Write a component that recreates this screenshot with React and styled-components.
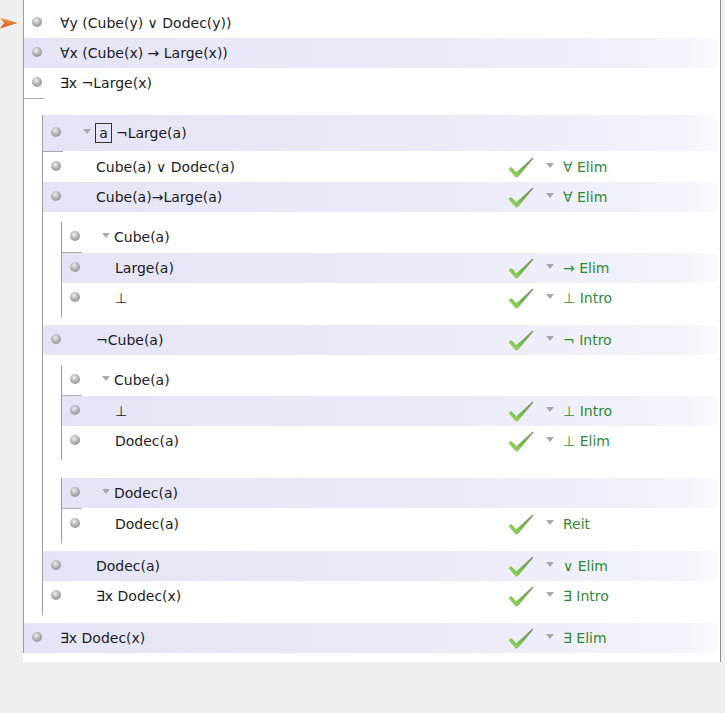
import styled, { createGlobalStyle, css } from 'styled-components'

const GlobalStyle = createGlobalStyle`
  html, body {
    margin: 0;
    padding: 0;
    background: #efefef;
  }
  body {
    font-family: "DejaVu Sans", Verdana, sans-serif;
  }
`

const proofData = {
  premises: [
    '∀y (Cube(y) ∨ Dodec(y))',
    '∀x (Cube(x) → Large(x))',
    '∃x ¬Large(x)',
  ],
  steps: [
    {
      assume: { text: '¬Large(a)', boxed: 'a' },
      steps: [
        { text: 'Cube(a) ∨ Dodec(a)', rule: '∀ Elim' },
        { text: 'Cube(a)→Large(a)', rule: '∀ Elim' },
        {
          assume: { text: 'Cube(a)' },
          steps: [
            { text: 'Large(a)', rule: '→ Elim' },
            { text: '⊥', rule: '⊥ Intro' },
          ],
        },
        { text: '¬Cube(a)', rule: '¬ Intro' },
        {
          assume: { text: 'Cube(a)' },
          steps: [
            { text: '⊥', rule: '⊥ Intro' },
            { text: 'Dodec(a)', rule: '⊥ Elim' },
          ],
        },
        {
          assume: { text: 'Dodec(a)' },
          steps: [{ text: 'Dodec(a)', rule: 'Reit' }],
        },
        { text: 'Dodec(a)', rule: '∨ Elim' },
        { text: '∃x Dodec(x)', rule: '∃ Intro' },
      ],
    },
    { text: '∃x Dodec(x)', rule: '∃ Elim' },
  ],
}

// numero de linea global, para alternar el fondo
function numberSteps(steps, counter) {
  return steps.map((s) => {
    if (s.assume) {
      const assume = { ...s.assume, n: counter.n++ }
      return { ...s, assume, steps: numberSteps(s.steps, counter) }
    }
    return { ...s, n: counter.n++ }
  })
}

const counter = { n: 0 }
const premises = proofData.premises.map((text) => ({ text, n: counter.n++ }))
const steps = numberSteps(proofData.steps, counter)

const Page = styled.div`
  width: 725px;
  height: 713px;
  overflow: hidden;
  background: #efefef;
`

const Panel = styled.div`
  margin-left: 23px;
  width: 698px;
  box-sizing: border-box;
  background: #fff;
  border-right: 1px solid #8e8e8e;
  padding-bottom: 9px;
`

const ProofBox = styled.div`
  display: flex;
  flex-direction: column;
  border-left: 1px solid #9e9e9e;

  ${({ $main }) =>
    $main
      ? css`
          padding-top: 8px;
        `
      : css`
          margin: 10px 0 8px 18px;
          padding-bottom: 4px;
        `}
`

const Bar = styled.div`
  width: 20px;
  height: 1px;
  background: #a8a8a8;
  margin-bottom: ${({ $gap }) => $gap || 0}px;
`

const Row = styled.div`
  position: relative;
  display: flex;
  align-items: center;
  height: ${({ $tall }) => ($tall ? 36 : 30)}px;
  margin-right: 3px;
  background: ${({ $shaded }) =>
    $shaded
      ? 'linear-gradient(90deg, #e4e4f6 0%, #eaeaf8 55%, #f3f3fb 95%, #fafafe 100%)'
      : 'transparent'};
`

const Pointer = styled.svg`
  position: absolute;
  left: -24px;
  top: 9px;
`

const Bullet = styled.span`
  flex: none;
  width: 10px;
  height: 10px;
  border-radius: 50%;
  margin-left: 8px;
  margin-top: -2px;
  background: radial-gradient(
    circle at 42% 35%,
    #f0f0f0 0%,
    #b2b2b2 45%,
    #7e7e7e 100%
  );
`

const Formula = styled.div`
  flex: 1;
  display: flex;
  align-items: center;
  padding-left: ${({ $depth }) => ($depth ? 35 : 18)}px;
  font-size: 14px;
  color: #1c1c1c;
  white-space: nowrap;
`

const Caret = styled.span`
  flex: none;
  width: 0;
  height: 0;
  border-left: 4.5px solid transparent;
  border-right: 4.5px solid transparent;
  border-top: 5px solid #a9a9a9;
  margin-top: -3px;
  ${({ $hang }) =>
    $hang
      ? css`
          margin-left: -13px;
          margin-right: 4px;
        `
      : css`
          margin-left: 12px;
          margin-right: 9px;
        `}
`

const ConstBox = styled.span`
  display: inline-flex;
  align-items: center;
  justify-content: center;
  width: 17px;
  height: 20px;
  box-sizing: border-box;
  border: 1px solid #333;
  margin-right: 4px;
`

const Rule = styled.div`
  flex: none;
  width: 209px;
  display: flex;
  align-items: center;
`

const RuleName = styled.span`
  font-size: 14px;
  color: #2e8b35;
  white-space: nowrap;
`

function CheckMark() {
  return (
    <svg width='26' height='21' viewBox='0 0 26 21'>
      <defs>
        <linearGradient id='chk' x1='0' y1='1' x2='1' y2='0'>
          <stop offset='0' stopColor='#a9dc6c' />
          <stop offset='0.45' stopColor='#72b84a' />
          <stop offset='1' stopColor='#7c8a78' />
        </linearGradient>
      </defs>
      <path
        d='M0.5 12 L3.2 10 L8.4 15.2 L24.6 0.6 L25.4 1.4 L9.8 20.2 L7.6 20.4 Z'
        fill='url(#chk)'
      />
    </svg>
  )
}

function Line({ line, depth, assumption }) {
  return (
    <Row $shaded={line.n % 2 === 1} $tall={!!line.boxed}>
      {line.n === 0 && (
        <Pointer width='18' height='12' viewBox='0 0 18 12'>
          <defs>
            <linearGradient id='ptr' x1='0' y1='0' x2='0' y2='1'>
              <stop offset='0' stopColor='#f6a24a' />
              <stop offset='1' stopColor='#d4561c' />
            </linearGradient>
          </defs>
          <path d='M0 0.5 L17.5 6 L0 11.5 L4 6 Z' fill='url(#ptr)' />
        </Pointer>
      )}
      <Bullet />
      <Formula $depth={depth}>
        {assumption && <Caret $hang />}
        {line.boxed && <ConstBox>{line.boxed}</ConstBox>}
        {line.text}
      </Formula>
      {line.rule && (
        <Rule>
          <CheckMark />
          <Caret />
          <RuleName>{line.rule}</RuleName>
        </Rule>
      )}
    </Row>
  )
}

function Steps({ items, depth }) {
  return items.map((s, i) =>
    s.assume ? (
      <Subproof key={i} proof={s} depth={depth + 1} />
    ) : (
      <Line key={i} line={s} depth={depth} />
    )
  )
}

function Subproof({ proof, depth }) {
  return (
    <ProofBox>
      <Line line={proof.assume} depth={depth} assumption />
      <Bar />
      <Steps items={proof.steps} depth={depth} />
    </ProofBox>
  )
}

export default function App() {
  return (
    <Page>
      <GlobalStyle />
      <Panel>
        <ProofBox $main>
          {premises.map((p) => (
            <Line key={p.n} line={p} depth={0} />
          ))}
          <Bar $gap={6} />
          <Steps items={steps} depth={0} />
        </ProofBox>
      </Panel>
    </Page>
  )
}
